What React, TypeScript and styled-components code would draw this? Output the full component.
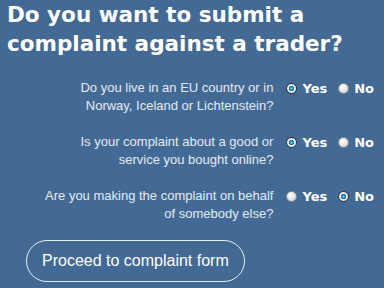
import { useState } from "react";
import styled, { createGlobalStyle } from "styled-components";

const GlobalStyle = createGlobalStyle`
  html, body {
    margin: 0;
    padding: 0;
    background-color: #436a94;
  }
`;

const ScPage = styled.div`
  width: 384px;
  height: 288px;
  overflow: hidden;
  background-color: #436a94;
  color: #ffffff;
`;

const ScTitle = styled.h1`
  margin: 0;
  padding: 0 0 0 7px;
  font-family: "DejaVu Sans", Verdana, sans-serif;
  font-weight: bold;
  font-size: 21.5px;
  line-height: 29px;
  color: #ffffff;
`;

const ScList = styled.div`
  margin-top: 21px;
  display: flex;
  flex-direction: column;
  gap: 18px;
`;

const ScRow = styled.div`
  display: grid;
  grid-template-columns: 1fr auto;
  column-gap: 13px;
  padding-right: 10px;
`;

const ScQuestion = styled.div`
  font-family: "Liberation Sans", Arial, sans-serif;
  font-size: 13px;
  line-height: 18px;
  color: #e4ebf3;
  text-align: right;
`;

const ScOptions = styled.div`
  display: flex;
  align-items: flex-start;
  height: 18px;
`;

const ScOption = styled.label`
  display: flex;
  align-items: center;
  gap: 5px;
  height: 18px;
  font-family: "DejaVu Sans", Verdana, sans-serif;
  font-weight: bold;
  font-size: 13px;
  color: #ffffff;
  cursor: pointer;

  & + & {
    margin-left: 11px;
  }
`;

const ScRadio = styled.input`
  appearance: none;
  margin: 0;
  width: 11px;
  height: 11px;
  border-radius: 50%;
  border: 1px solid #8a8f96;
  background: radial-gradient(circle at 40% 35%, #ffffff 0%, #e2e2e2 55%, #c4c4c4 100%);
  box-sizing: border-box;
  cursor: pointer;

  &:checked {
    border-color: #26323d;
    background: radial-gradient(circle, #6fd0ff 0%, #1f8fc8 28%, #0d4f7a 40%, #f2f2f2 46%, #d8d8d8 100%);
  }
`;

const ScButton = styled.button`
  margin: 17px 0 0 26px;
  height: 42px;
  padding: 0 15px;
  border: 1px solid #e8eef4;
  border-radius: 21px;
  background: transparent;
  color: #ffffff;
  font-family: "Liberation Sans", Arial, sans-serif;
  font-size: 16px;
  cursor: pointer;
`;

const questions = [
  {
    id: "eu",
    text: (
      <>
        Do you live in an EU country or in
        <br />
        Norway, Iceland or Lichtenstein?
      </>
    ),
    initial: "yes",
  },
  {
    id: "online",
    text: (
      <>
        Is your complaint about a good or
        <br />
        service you bought online?
      </>
    ),
    initial: "yes",
  },
  {
    id: "behalf",
    text: (
      <>
        Are you making the complaint on behalf
        <br />
        of somebody else?
      </>
    ),
    initial: "no",
  },
];

export default function App() {
  const [answers, setAnswers] = useState<Record<string, string>>(
    Object.fromEntries(questions.map((q) => [q.id, q.initial]))
  );

  return (
    <ScPage>
      <GlobalStyle />
      <ScTitle>
        Do you want to submit a
        <br />
        complaint against a trader?
      </ScTitle>
      <ScList>
        {questions.map((q) => (
          <ScRow key={q.id}>
            <ScQuestion>{q.text}</ScQuestion>
            <ScOptions>
              {["yes", "no"].map((v) => (
                <ScOption key={v}>
                  <ScRadio
                    type="radio"
                    name={q.id}
                    checked={answers[q.id] === v}
                    onChange={() => setAnswers({ ...answers, [q.id]: v })}
                  />
                  {v === "yes" ? "Yes" : "No"}
                </ScOption>
              ))}
            </ScOptions>
          </ScRow>
        ))}
      </ScList>
      <ScButton>Proceed to complaint form</ScButton>
    </ScPage>
  );
}
